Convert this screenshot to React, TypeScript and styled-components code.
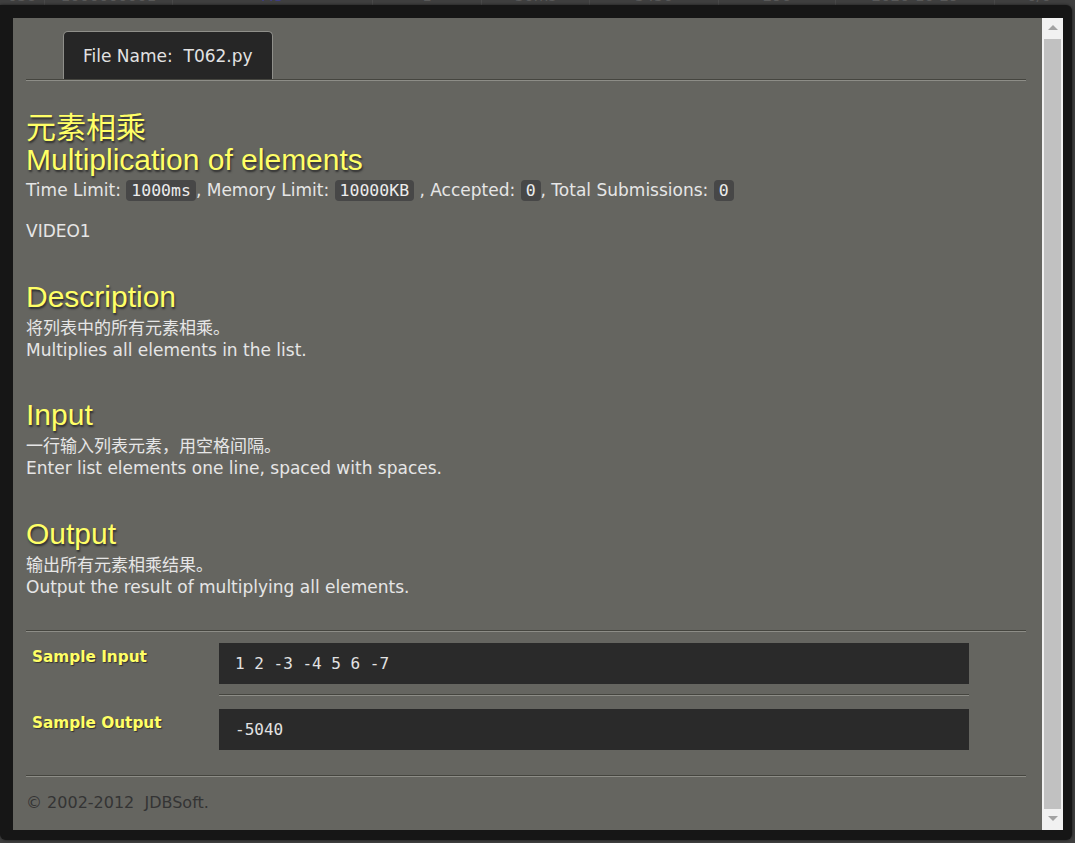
import React from "react";
import styled, { createGlobalStyle } from "styled-components";

const GlobalStyle = createGlobalStyle`
  html, body {
    margin: 0;
    padding: 0;
    background: #3f3f3f;
    overflow: hidden;
  }
  body {
    font-family: "DejaVu Sans", "Noto Sans CJK SC", sans-serif;
  }
`;

/* ---------- page behind the dialog ---------- */
const BgRow = styled.div`
  display: flex;
  margin-top: -12px;
  height: 18px;
  font: 15px/17px "DejaVu Sans", sans-serif;
`;

const BgCell = styled.div<{ $w: number; $blue?: boolean }>`
  width: ${(p) => p.$w}px;
  flex: none;
  text-align: center;
  border-right: 1px solid #4a4a4a;
  color: ${(p) => (p.$blue ? "#3d3d86" : "#5a5a5a")};
`;

/* ---------- dialog ---------- */
const Overlay = styled.div`
  position: fixed;
  top: 5px;
  left: 0;
  right: 3px;
  bottom: 3px;
  display: flex;
  padding: 13px 9px 10px 13px;
  background: #161616;
  border-radius: 0 6px 6px 6px;
  box-shadow: 0 0 3px rgba(0, 0, 0, 0.6);
`;

const Content = styled.div`
  flex: 1;
  min-width: 0;
  overflow: hidden;
  padding: 13px 16px 0 13px;
  background: #656560;
  color: #e6e6e6;
  font: 17px/22px "DejaVu Sans", "Noto Sans CJK SC", sans-serif;
`;

const ScrollBar = styled.div`
  width: 21px;
  flex: none;
  display: flex;
  flex-direction: column;
  background: #f1f1f1;
`;

const ScrollButton = styled.div<{ $down?: boolean }>`
  height: 21px;
  flex: none;
  display: flex;
  align-items: center;
  justify-content: center;

  &::before {
    content: "";
    width: 0;
    height: 0;
    border-left: 5px solid transparent;
    border-right: 5px solid transparent;
    ${(p) =>
      p.$down
        ? "border-top: 5px solid #a3a3a3; margin-top: -3px;"
        : "border-bottom: 5px solid #a3a3a3; margin-top: -2px;"}
  }
`;

const ScrollThumb = styled.div`
  flex: 1;
  margin: 0 2px;
  background: #c1c1c1;
`;

/* ---------- tab ---------- */
const TabBar = styled.div`
  display: flex;
  padding-left: 37px;
  border-bottom: 1px solid #45453f;
  box-shadow: 0 1px 0 #8d8d87;
`;

const Tab = styled.div`
  height: 48px;
  box-sizing: border-box;
  display: flex;
  align-items: center;
  padding: 0 19px;
  background: #262626;
  border: 1px solid #8f8f8a;
  border-bottom: none;
  border-radius: 5px 5px 0 0;
  color: #e2e2e2;
  font-size: 17px;
  white-space: pre;
`;

/* ---------- problem text ---------- */
const Title = styled.h1`
  margin: 32px 0 0;
  font: 400 30px/32px "Liberation Sans", Arial, "Noto Sans CJK SC", sans-serif;
  color: #ffff66;
  text-shadow: 1px 2px 2px #2e2e2e;
`;

const TitleLine = styled.span`
  display: block;
`;

const Meta = styled.div`
  margin-top: 3px;
`;

const Code = styled.code`
  display: inline-block;
  vertical-align: top;
  margin-top: 1px;
  padding: 0 5px;
  border-radius: 4px;
  background: #474747;
  color: #ececec;
  font: 16.5px/21px "DejaVu Sans Mono", monospace;
`;

const Video = styled.div`
  margin-top: 19px;
`;

const Section = styled.section`
  margin-top: 38.5px;
`;

const SectionTitle = styled.h2`
  margin: 0;
  font: 400 30px/32px "Liberation Sans", Arial, sans-serif;
  color: #ffff66;
  text-shadow: 1px 2px 2px #2e2e2e;
`;

const Paragraph = styled.div`
  margin-top: 4px;
`;

const Divider = styled.div<{ $gap: number }>`
  margin-top: ${(p) => p.$gap}px;
  border-top: 1px solid #45453f;
  border-bottom: 1px solid #8d8d87;
`;

/* ---------- samples ---------- */
const SampleGrid = styled.div`
  display: grid;
  grid-template-columns: 193px 750px;
  padding-top: 11px;
`;

const SampleLabel = styled.div`
  padding: 3px 0 0 6px;
  font: bold 15.3px/22px "DejaVu Sans", sans-serif;
  color: #ffff66;
  text-shadow: 1px 1px 1px #333;
`;

const SampleBox = styled.pre`
  margin: 0;
  height: 41px;
  box-sizing: border-box;
  padding: 0 16px;
  background: #2a2a2a;
  color: #e2e2e2;
  font: 16px/41px "DejaVu Sans Mono", monospace;
`;

const SampleRule = styled.div`
  grid-column: 2;
  margin: 10px 0 13px;
  border-top: 1px solid #45453f;
  border-bottom: 1px solid #8d8d87;
`;

const Footer = styled.div`
  margin-top: 15px;
  color: #343434;
  font-size: 16px;
  white-space: pre;
`;

const bgCells: [number, string, boolean?][] = [
  [44, "038"],
  [127, "1000000001"],
  [199, "AC", true],
  [108, "1"],
  [107, "30ms"],
  [128, "3436"],
  [116, "296"],
  [158, "2020-10-29"],
  [88, "0/0"],
];

export default function App() {
  return (
    <>
      <GlobalStyle />
      <BgRow>
        {bgCells.map(([w, t, b], i) => (
          <BgCell key={i} $w={w} $blue={b}>
            {t}
          </BgCell>
        ))}
      </BgRow>

      <Overlay>
        <Content>
          <TabBar>
            <Tab>File Name:  T062.py</Tab>
          </TabBar>

          <Title>
            <TitleLine>元素相乘</TitleLine>
            <TitleLine>Multiplication of elements</TitleLine>
          </Title>

          <Meta>
            Time Limit: <Code>1000ms</Code>, Memory Limit: <Code>10000KB</Code> , Accepted:{" "}
            <Code>0</Code>, Total Submissions: <Code>0</Code>
          </Meta>

          <Video>VIDEO1</Video>

          <Section>
            <SectionTitle>Description</SectionTitle>
            <Paragraph>
              将列表中的所有元素相乘。
              <br />
              Multiplies all elements in the list.
            </Paragraph>
          </Section>

          <Section>
            <SectionTitle>Input</SectionTitle>
            <Paragraph>
              一行输入列表元素，用空格间隔。
              <br />
              Enter list elements one line, spaced with spaces.
            </Paragraph>
          </Section>

          <Section>
            <SectionTitle>Output</SectionTitle>
            <Paragraph>
              输出所有元素相乘结果。
              <br />
              Output the result of multiplying all elements.
            </Paragraph>
          </Section>

          <Divider $gap={32} />

          <SampleGrid>
            <SampleLabel>Sample Input</SampleLabel>
            <SampleBox>1 2 -3 -4 5 6 -7</SampleBox>
            <SampleRule />
            <SampleLabel>Sample Output</SampleLabel>
            <SampleBox>-5040</SampleBox>
          </SampleGrid>

          <Divider $gap={25} />

          <Footer>© 2002-2012  JDBSoft.</Footer>
        </Content>

        <ScrollBar>
          <ScrollButton />
          <ScrollThumb />
          <ScrollButton $down />
        </ScrollBar>
      </Overlay>
    </>
  );
}
